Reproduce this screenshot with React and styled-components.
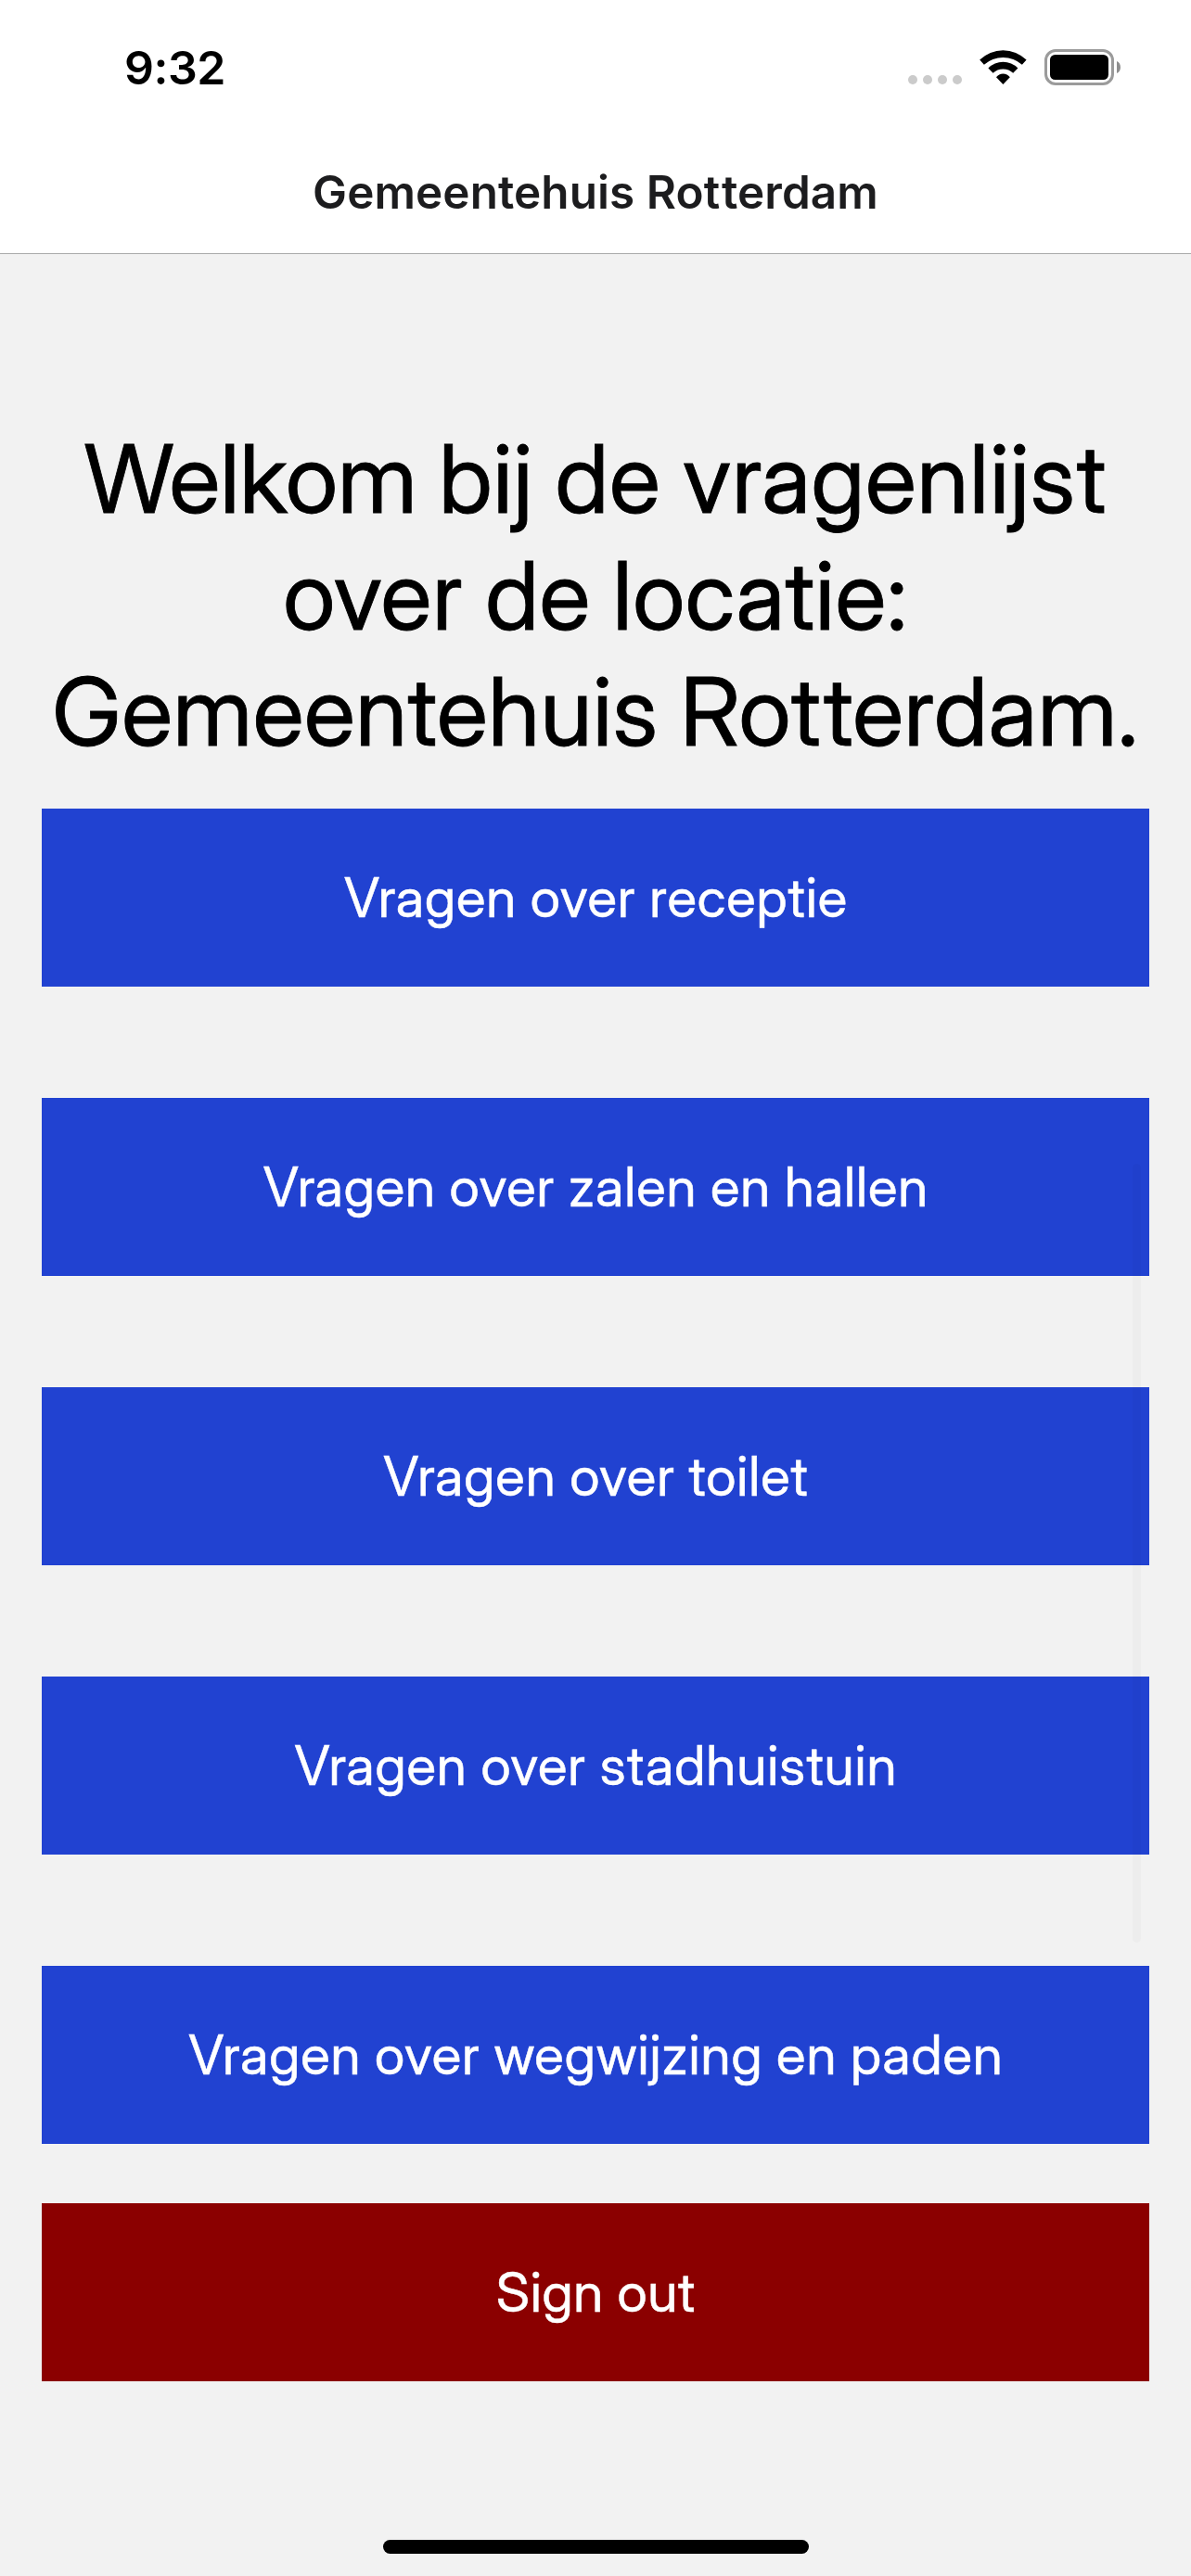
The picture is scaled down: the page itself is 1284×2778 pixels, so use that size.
import React from "react";
import styled, { createGlobalStyle } from "styled-components";

const display = `"Inter Display", Inter, "Liberation Sans", sans-serif`;
const text = `Inter, "Liberation Sans", sans-serif`;

const GlobalStyle = createGlobalStyle`
  * { box-sizing: border-box; }
  body {
    margin: 0;
    background: #f2f2f2;
    font-family: ${text};
    font-variant-ligatures: none;
  }
`;

const Screen = styled.div`
  position: relative;
  height: 2778px;
  display: flex;
  flex-direction: column;
  background: #f2f2f2;
  overflow: hidden;
`;

const Header = styled.header`
  height: 274px;
  background: #fff;
  border-bottom: 1px solid #a9abaa;
`;

const StatusBar = styled.div`
  height: 141px;
  display: flex;
  justify-content: space-between;
  align-items: flex-start;
  padding: 42px 76px 0 134px;
`;

const Clock = styled.span`
  font-size: 50px;
  font-weight: 600;
  line-height: 62px;
  letter-spacing: -0.5px;
  color: #000;
`;

const StatusIcons = styled.div`
  height: 50px;
  display: flex;
  align-items: flex-end;
  gap: 19px;
`;

const SignalDots = styled.div`
  display: flex;
  gap: 5.6px;
  margin-bottom: 1px;
`;

const Dot = styled.span`
  width: 10.4px;
  height: 10.4px;
  border-radius: 50%;
  background: #cbcbcb;
`;

const WifiIcon = styled.svg`
  width: 51px;
  height: 37px;
  margin-bottom: 1px;
`;

const BatteryIcon = styled.svg`
  width: 82px;
  height: 39px;
`;

const Title = styled.h1`
  margin: 0;
  text-align: center;
  font-size: 49.4px;
  font-weight: 600;
  line-height: 132px;
  letter-spacing: 0.1px;
  color: #1c1c1e;
`;

const Main = styled.main`
  display: flex;
  flex-direction: column;
  padding: 180px 45px 0;
`;

const Welcome = styled.h2`
  margin: 0 0 41.5px;
  text-align: center;
  font-family: ${display};
  font-size: 102px;
  font-weight: 400;
  line-height: 125.5px;
  color: #000;
  -webkit-text-stroke: 0.8px currentColor;
`;

const Line = styled.span`
  display: block;
  white-space: nowrap;
  letter-spacing: ${(p) => p.$tracking}px;
  word-spacing: ${(p) => p.$wordGap}px;
`;

const Spaced = styled.span`
  letter-spacing: ${(p) => p.$gap};
`;

const TopicList = styled.div`
  display: flex;
  flex-direction: column;
  gap: 120px;
  margin-bottom: 64px;
`;

const Button = styled.button`
  height: 192px;
  border: 0;
  padding: 0 0 1px 1px;
  font-family: ${display};
  font-size: 58.5px;
  font-weight: 400;
  font-variant-ligatures: none;
  letter-spacing: ${(p) => (p.$danger ? "0.75px" : "0.95px")};
  word-spacing: -1px;
  color: #fff;
  background: ${(p) => (p.$danger ? "#8b0000" : "#2142d1")};
  -webkit-text-stroke: 0.5px currentColor;
`;

const ScrollIndicator = styled.div`
  position: absolute;
  top: 1255px;
  right: 54px;
  width: 9px;
  height: 840px;
  border-radius: 4.5px;
  background: rgba(0, 0, 0, 0.02);
`;

const HomeIndicator = styled.div`
  align-self: center;
  width: 459px;
  height: 15px;
  margin: auto 0 24px;
  border-radius: 8px;
  background: #000;
`;

const topics = [
  "Vragen over receptie",
  "Vragen over zalen en hallen",
  "Vragen over toilet",
  "Vragen over stadhuistuin",
  "Vragen over wegwijzing en paden",
];

export default function App() {
  return (
    <Screen>
      <GlobalStyle />
      <Header>
        <StatusBar>
          <Clock>9:32</Clock>
          <StatusIcons>
            <SignalDots>
              <Dot />
              <Dot />
              <Dot />
              <Dot />
            </SignalDots>
            <WifiIcon viewBox="0 0 51 37" aria-hidden="true">
              <path d="M0.2 10.6A35.7 35.7 0 0 1 50.6 10.6L45.9 15.8A30.8 30.8 0 0 0 4.9 15.8Z" />
              <path d="M9.4 19.4A22.7 22.7 0 0 1 41.4 19.4L36.2 24.8A15.5 15.5 0 0 0 14.6 24.8Z" />
              <path d="M18 29.2A9.2 9.2 0 0 1 32.8 29.2L25.4 37Z" />
            </WifiIcon>
            <BatteryIcon viewBox="0 0 82 39" aria-hidden="true">
              <rect x="1.5" y="1.5" width="72" height="36" rx="10.5" fill="none" stroke="#9b9b9b" strokeWidth="3" />
              <rect x="6" y="6" width="63" height="27" rx="5.5" />
              <path d="M78 13C83.3 15 83.3 24 78 26Z" fill="#8e8e8e" />
            </BatteryIcon>
          </StatusIcons>
        </StatusBar>
        <Title>
          Gemeentehuis Ro<Spaced $gap="1.8px">t</Spaced>terdam
        </Title>
      </Header>
      <Main>
        <Welcome>
          <Line $tracking={0.8} $wordGap={-2.9}>
            <Spaced $gap="0.1px">Welkom</Spaced> bij de vragenlijst
          </Line>
          <Line $tracking={0.6} $wordGap={-2.3}>over de locatie:</Line>
          <Line $tracking={0.6} $wordGap={-2.4}>
            Gemeentehuis Ro<Spaced $gap="3.2px">t</Spaced>terdam.
          </Line>
        </Welcome>
        <TopicList>
          {topics.map((topic) => (
            <Button key={topic}>{topic}</Button>
          ))}
        </TopicList>
        <Button $danger>Sign out</Button>
      </Main>
      <HomeIndicator />
      <ScrollIndicator />
    </Screen>
  );
}
